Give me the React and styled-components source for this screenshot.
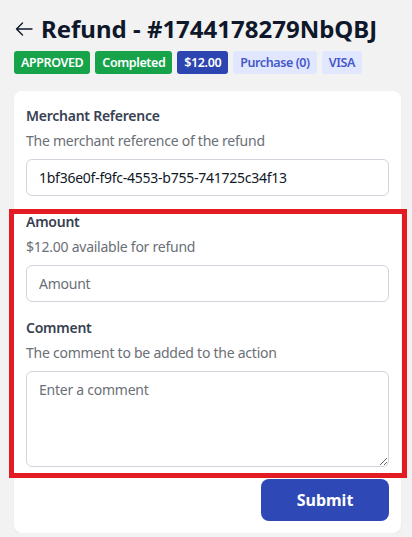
import React from 'react';
import styled, { createGlobalStyle } from 'styled-components';

const GlobalStyle = createGlobalStyle`
  * { box-sizing: border-box; }
  body {
    margin: 0;
    background: #f2f2f2;
    font-family: "Noto Sans", "Open Sans", sans-serif;
    color: #111827;
  }
`;

const Page = styled.div`
  padding: 12px 11px 0 14px;
`;

const Header = styled.div`
  display: flex;
  align-items: center;
  gap: 8px;
  height: 34px;
`;

const BackButton = styled.button`
  display: flex;
  align-items: center;
  padding: 0;
  margin-left: 1px;
  border: none;
  background: none;
  color: #111827;
  cursor: pointer;
`;

const Title = styled.h1`
  margin: 0;
  font-size: 24px;
  line-height: 32px;
  font-weight: 700;
  color: #0f172a;
`;

const Badges = styled.div`
  display: flex;
  gap: 5px;
  margin-top: 5px;
`;

const Badge = styled.span`
  display: inline-flex;
  align-items: center;
  height: 23px;
  padding: 0 7px;
  border-radius: 3px;
  font-size: 12.5px;
  font-weight: 600;
  letter-spacing: -0.4px;
  background: ${p => (p.tone === 'green' ? '#16a34a' : p.tone === 'blue' ? '#2d45b0' : '#e0e7ff')};
  color: ${p => (p.tone === 'light' ? '#4658c8' : '#ffffff')};
`;

const Card = styled.form`
  margin: 17px 0 0;
  width: 387px;
  background: #ffffff;
  border-radius: 8px;
  padding: 15px 12px 12px;
  box-shadow: 0 1px 2px rgba(0, 0, 0, 0.06);
  display: flex;
  flex-direction: column;
  letter-spacing: -0.25px;
`;

const Field = styled.div`
  display: flex;
  flex-direction: column;
  & + & { margin-top: 16px; }
`;

const Label = styled.label`
  font-size: 14px;
  line-height: 20px;
  font-weight: 600;
  color: #374151;
`;

const Hint = styled.p`
  margin: 5px 0 8px;
  font-size: 14px;
  line-height: 20px;
  color: #6b6f76;
`;

const Input = styled.input`
  height: 37px;
  width: 100%;
  padding: 0 12px;
  border: 1px solid #d1d5db;
  border-radius: 6px;
  font-family: inherit;
  font-size: 14px;
  letter-spacing: inherit;
  color: #111827;
  background: #fff;
  &::placeholder { color: #6b6f76; }
`;

const TextArea = styled.textarea`
  height: 96px;
  width: 100%;
  padding: 8px 12px;
  border: 1px solid #d1d5db;
  border-radius: 6px;
  font-family: inherit;
  font-size: 14px;
  letter-spacing: inherit;
  line-height: 20px;
  color: #111827;
  &::placeholder { color: #6b6f76; }
`;

const Highlighted = styled.div`
  position: relative;
  margin-top: 16px;
`;

const HighlightFrame = styled.div`
  position: absolute;
  left: -17px;
  right: -18px;
  top: -3px;
  bottom: -11px;
  border: 5px solid #e31c23;
  pointer-events: none;
`;

const Actions = styled.div`
  display: flex;
  justify-content: flex-end;
  margin-top: 12px;
`;

const SubmitButton = styled.button`
  width: 128px;
  height: 42px;
  border: none;
  border-radius: 8px;
  background: #2e49b6;
  color: #fff;
  font-family: inherit;
  font-size: 16px;
  font-weight: 700;
  cursor: pointer;
`;

const ArrowLeft = () => (
  <svg width="18" height="14" viewBox="0 0 18 14" fill="none" stroke="currentColor" strokeWidth="1.4" strokeLinecap="round" strokeLinejoin="round">
    <path d="M17 7H1.5M7.5 1L1.5 7l6 6" />
  </svg>
);

const App = () => {
  return (
    <Page>
      <GlobalStyle />
      <Header>
        <BackButton type="button" aria-label="Back">
          <ArrowLeft />
        </BackButton>
        <Title>Refund - #1744178279NbQBJ</Title>
      </Header>
      <Badges>
        <Badge tone="green">APPROVED</Badge>
        <Badge tone="green">Completed</Badge>
        <Badge tone="blue">$12.00</Badge>
        <Badge tone="light">Purchase (0)</Badge>
        <Badge tone="light">VISA</Badge>
      </Badges>
      <Card onSubmit={e => e.preventDefault()}>
        <Field>
          <Label>Merchant Reference</Label>
          <Hint>The merchant reference of the refund</Hint>
          <Input defaultValue="1bf36e0f-f9fc-4553-b755-741725c34f13" />
        </Field>
        <Highlighted>
          <HighlightFrame />
          <Field>
            <Label>Amount</Label>
            <Hint>$12.00 available for refund</Hint>
            <Input placeholder="Amount" />
          </Field>
          <Field>
            <Label>Comment</Label>
            <Hint>The comment to be added to the action</Hint>
            <TextArea placeholder="Enter a comment" />
          </Field>
        </Highlighted>
        <Actions>
          <SubmitButton type="submit">Submit</SubmitButton>
        </Actions>
      </Card>
    </Page>
  );
};

export default App;
